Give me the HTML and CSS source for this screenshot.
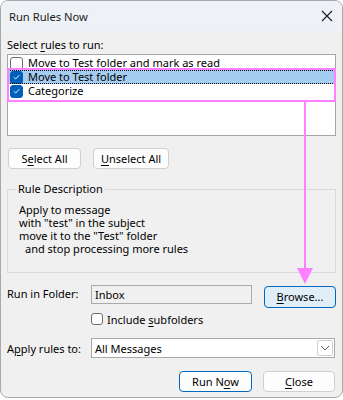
FILE: index.html
```html
<!DOCTYPE html>
<html>
<head>
<meta charset="utf-8">
<link rel="stylesheet" href="styles.css">
</head>
<body>
<div class="window">
  <div class="titlebar">
    <span class="title">Run Rules Now</span>
    <svg class="close" width="12" height="12" viewBox="0 0 12 12"><path d="M1 1 L11 11 M11 1 L1 11" stroke="#1a1a1a" stroke-width="1.1" fill="none"/></svg>
  </div>
  <div class="content">
    <div class="label-top">Select <u>r</u>ules to run:</div>
    <div class="listbox">
      <div class="row">
        <span class="cb"></span><span class="rtext">Move to Test folder and mark as read</span>
      </div>
      <div class="row selected">
        <span class="cb checked"><svg width="12" height="12" viewBox="0 0 12 12"><path d="M3 6.2 L5.1 8.2 L9 4" stroke="#fff" stroke-width="1" fill="none"/></svg></span><span class="rtext">Move to Test folder</span>
      </div>
      <div class="row">
        <span class="cb checked"><svg width="12" height="12" viewBox="0 0 12 12"><path d="M3 6.2 L5.1 8.2 L9 4" stroke="#fff" stroke-width="1" fill="none"/></svg></span><span class="rtext">Categorize</span>
      </div>
    </div>
    <div class="btnrow">
      <button class="btn sel">S<u>e</u>lect All</button>
      <button class="btn unsel"><u>U</u>nselect All</button>
    </div>
    <div class="group">
      <div class="legend">Rule Description</div>
      <div class="desc">
        <div>Apply to message</div>
        <div>with "test" in the subject</div>
        <div>move it to the "Test" folder</div>
        <div class="indent">and stop processing more rules</div>
      </div>
    </div>
    <div class="folderrow">
      <span class="flabel">Run in Folder:</span>
      <span class="textbox">Inbox</span>
      <button class="btn browse"><u>B</u>rowse...</button>
    </div>
    <div class="subrow">
      <span class="cb"></span><span>Include <u>s</u>ubfolders</span>
    </div>
    <div class="applyrow">
      <span class="flabel">A<u>p</u>ply rules to:</span>
      <span class="combo"><span class="ctext">All Messages</span><span class="dd"><svg width="10" height="6" viewBox="0 0 10 6"><path d="M1 1 L5 5 L9 1" stroke="#555" stroke-width="1" fill="none"/></svg></span></span>
    </div>
    <div class="footer">
      <button class="btn runnow">Run N<u>o</u>w</button>
      <button class="btn close-btn"><u>C</u>lose</button>
    </div>
  </div>
  <div class="pinkbox"></div>
  <div class="pinkline"></div>
  <div class="pinkarrow"></div>
</div>
</body>
</html>
```

FILE: styles.css
```css
* { box-sizing: border-box; }
html, body { margin: 0; padding: 0; background: #ffffff; }
body {
  font-family: "Noto Sans", "Open Sans", sans-serif;
  font-size: 11px;
  color: #000;
}
u { text-decoration-thickness: 1px; text-underline-offset: 2px; }
.window {
  position: relative;
  width: 343px;
  height: 398px;
  border: 1px solid #a9a9a9;
  border-radius: 8px;
  overflow: hidden;
  background: #f0f0f0;
}
.titlebar {
  height: 30px;
  background: #eef2f7;
  display: flex;
  align-items: center;
  justify-content: space-between;
  padding: 0 9px 0 8px;
}
.title { font-size: 11.2px; color: #1a1a1a; }
.close { display: block; }
.content { padding: 0 6px; }
.label-top { margin-top: 6px; line-height: 16px; height: 16px; }
.listbox {
  margin-top: 1px;
  height: 82px;
  background: #fff;
  border: 1px solid #a6a6a6;
  padding-top: 1px;
}
.row {
  height: 14px;
  display: flex;
  align-items: center;
  padding-left: 2px;
  line-height: 14px;
}
.row.selected {
  background: #a5cdf1;
  outline: 1px dotted #000;
  outline-offset: -1px;
}
.cb {
  width: 13px;
  height: 13px;
  border: 1px solid #6e6e6e;
  border-radius: 3px;
  background: #fff;
  flex: none;
  display: inline-flex;
  align-items: center;
  justify-content: center;
}
.cb.checked { background: #005fb8; border-color: #005fb8; }
.cb svg { display: block; }
.rtext { margin-left: 5px; }
.btnrow { margin-top: 12px; display: flex; gap: 12px; padding-left: 1px; }
.btn {
  font-family: inherit;
  font-size: 11px;
  height: 21px;
  padding: 0;
  background: #fdfdfd;
  border: 1px solid #d0d0d0;
  border-radius: 4px;
  color: #000;
  line-height: 19px;
}
.sel { width: 73px; }
.unsel { width: 76px; }
.group {
  position: relative;
  margin-top: 20px;
  height: 84px;
  border: 1px solid #dadada;
  padding: 13px 0 0 11px;
}
.legend {
  position: absolute;
  top: -9px;
  left: 8px;
  padding: 0 2px;
  background: #f0f0f0;
  line-height: 16px;
}
.desc div { line-height: 13px; height: 13px; }
.desc .indent { padding-left: 6px; }
.folderrow {
  margin-top: 12px;
  display: flex;
  align-items: flex-start;
  height: 23px;
}
.flabel { width: 84px; flex: none; line-height: 16px; margin-top: 1px; }
.textbox {
  width: 161px;
  height: 19px;
  border: 1px solid #aaaaaa;
  background: #f0f0f0;
  padding-left: 3px;
  line-height: 17px;
}
.browse {
  margin-left: 12px;
  margin-top: 1px;
  width: 72px;
  height: 22px;
  background: #e0eef9;
  border: 1px solid #0067c0;
  line-height: 20px;
}
.subrow {
  margin-top: 5px;
  margin-left: 84px;
  display: flex;
  align-items: center;
  height: 12px;
  gap: 4px;
}
.subrow .cb { width: 12px; height: 12px; }
.applyrow {
  margin-top: 13px;
  display: flex;
  align-items: center;
  height: 20px;
}
.combo {
  width: 244px;
  height: 20px;
  border: 1px solid #aaaaaa;
  background: #fff;
  display: flex;
  align-items: center;
  justify-content: space-between;
  padding: 0 1px 0 3px;
}
.dd {
  width: 16px;
  height: 16px;
  border: 1px solid #d0d0d0;
  border-radius: 2px;
  display: flex;
  align-items: center;
  justify-content: center;
}
.dd svg { display: block; }
.footer {
  margin-top: 13px;
  display: flex;
  justify-content: flex-end;
  gap: 11px;
  padding-right: 1px;
}
.runnow { width: 73px; border: 1px solid #0067c0; background: #fdfdfd; }
.close-btn { width: 72px; }
.pinkbox {
  position: absolute;
  left: 6px;
  top: 67px;
  width: 329px;
  height: 34px;
  border: 2px solid #ff80ff;
}
.pinkline {
  position: absolute;
  left: 303px;
  top: 100px;
  width: 2px;
  height: 170px;
  background: #ff80ff;
}
.pinkarrow {
  position: absolute;
  left: 296px;
  top: 267px;
  width: 0;
  height: 0;
  border-left: 8px solid transparent;
  border-right: 8px solid transparent;
  border-top: 16px solid #ff80ff;
}
```
